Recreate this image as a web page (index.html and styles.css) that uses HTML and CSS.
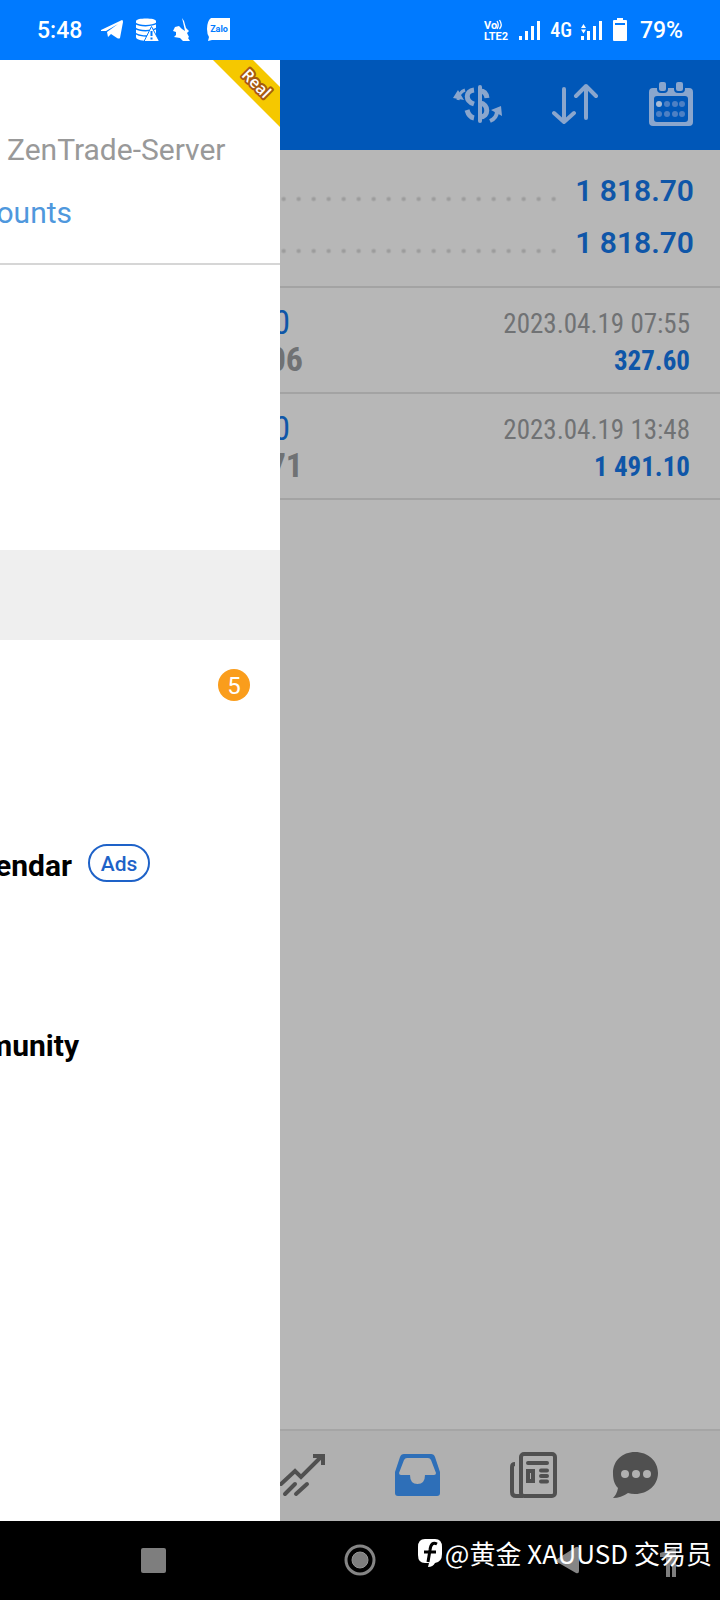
FILE: index.html
```
<!DOCTYPE html>
<html lang="en">
<head>
    <meta charset="UTF-8">
    <meta name="viewport" content="width=device-width, initial-scale=1.0">
    <title>History</title>
    <link rel="stylesheet" href="styles.css">
</head>
<body>

    <!-- Status bar -->
    <header class="status-bar">
        <div class="status-group">
            <span class="clock">5:48</span>
            <svg width="24" height="24" viewBox="0 0 24 24" fill="#fff"><path d="M2 12 L23 2 Q24 2 24 4 L21 20 Q20 21 18 20 L12 16 L9 19 L8 14 L19 6 L7 13 L2 13Z"/></svg>
            <svg width="24" height="24" viewBox="0 0 24 24"><path fill="#fff" d="M1 3 C1 -.3 21 -.3 21 3 V19 C21 24 1 24 1 19Z"/><path d="M0 5 C4 8.500 17 8.500 22 5 M0 10 C4 13.500 17 13.500 22 10 M0 15 C4 18.500 13 18.500 17 17" fill="none" stroke="#007aff" stroke-width="1.500"/><path fill="#fff" stroke="#007aff" stroke-width="1" d="M16.500 8.500 L24.500 23.500 H9Z"/><path stroke="#007aff" stroke-width="2" d="M16.500 13 V18 M16.500 19.500 V21.500"/></svg>
            <svg width="24" height="24" viewBox="0 0 24 24" fill="#fff"><path d="M11 0 L13 3 L15 10 L18 13 L16 15 L18 19 L17 20 L19 23 H12 L9 20 L3 19 L5 17 V14 L2 13 L4 9 L8 8 L11 11 L14 13 L12 4Z"/></svg>
            <svg width="24" height="24" viewBox="0 0 24 24"><path fill="#fff" d="M4 0 H23 V22 H5 L1 23 L2 19 Q0 16 0 11 Q0 3 4 0Z"/><text class="zalo-text" x="12" y="14" text-anchor="middle">Zalo</text></svg>
        </div>
        <div class="status-group status-right">
            <svg width="26" height="24" viewBox="0 0 26 24"><text class="volte-text" x="0" y="11">Vo</text><path d="M13 3 Q15.500 7 13 11 M15.500 2 Q19 7 15.500 11" fill="none" stroke="#fff" stroke-width="1.300"/><text class="volte-text" x="0" y="22">LTE2</text></svg>
            <svg width="22" height="20" viewBox="0 0 22 20" fill="#fff"><path d="M0 16h3v4H0zM6 11h3v9H6zM12 6h3v14h-3zM18 1h3v19h-3z"/></svg>
            <span class="network">4G</span>
            <svg width="22" height="20" viewBox="0 0 22 20" fill="#fff"><path d="M0 16h3v4H0zM6 11h3v9H6zM12 6h3v14h-3zM18 1h3v19h-3zM0 8 L2.500 4 L5 8zM0 9.500 H5 L2.500 13.500z"/></svg>
            <svg width="16" height="24" viewBox="0 0 16 24"><path fill="#fff" d="M5 0h6v2h3q1 0 1 1v19q0 1-1 1H2q-1 0-1-1V3q0-1 1-1h3z"/><path fill="#007aff" d="M3 5h10v2H3z"/></svg>
            <span class="clock">79%</span>
        </div>
    </header>

    <div class="app">

        <!-- Side menu -->
        <aside class="drawer">
            <svg class="ribbon" width="67" height="67" viewBox="0 0 67 67">
                <path fill="#f5c800" d="M0 0 H40 L67 27 V67Z"/>
                <text class="ribbon-text" transform="translate(43 24) rotate(45)" x="0" y="5" text-anchor="middle">Real</text>
            </svg>
            <div class="account">
                <div class="server">ZenTrade-Server</div>
                <a class="manage" href="#">ounts</a>
            </div>
            <nav class="menu">
                <a class="menu-item" href="#"></a>
                <a class="menu-item" href="#"></a>
                <a class="menu-item" href="#"></a>
                <a class="menu-item selected" href="#"></a>
                <a class="menu-item" href="#"><span class="badge">5</span></a>
                <a class="menu-item" href="#"></a>
                <a class="menu-item" href="#"><span class="menu-label">endar</span><span class="ads">Ads</span></a>
                <a class="menu-item" href="#"></a>
                <a class="menu-item" href="#"><span class="menu-label wide">munity</span></a>
            </nav>
        </aside>

        <!-- History page behind the menu -->
        <main class="page">
            <div class="toolbar">
                <button class="icon-button" aria-label="Symbols">
                    <svg width="50" height="46" viewBox="0 0 50 46" fill="none" stroke="#8aa6cd" stroke-width="5">
                        <path d="M27 6 V40" stroke-width="4" stroke-linecap="round"/>
                        <path d="M21 9 C12 10 12 20 21 23 M14 29 Q16 36 21 37"/>
                        <path d="M27 10 Q33 10 34 17 M27 22 C36 23 36 36 27 36"/>
                        <path d="M12 9 Q6 11 5 19" stroke-width="3"/><path d="M0 17 L5 9 L11 19Z M38 29 L48 25 L49 35Z" fill="#8aa6cd" stroke="none"/>
                        <path d="M44 30 Q44 37 37 40" stroke-width="4"/>
                    </svg>
                </button>
                <button class="icon-button" aria-label="Sort">
                    <svg width="48" height="46" viewBox="0 0 48 46" fill="none" stroke="#8aa6cd" stroke-width="4" stroke-linecap="round" stroke-linejoin="round"><path d="M12 8 V41 M2 32 L12 41 L22 32 M34 37 V5 M24 15 L34 5 L44 15"/></svg>
                </button>
                <button class="icon-button" aria-label="Period">
                    <svg width="44" height="46" viewBox="0 0 44 46">
                        <path fill="#8aa6cd" fill-rule="evenodd" d="M4 7 H40 Q44 7 44 11 V41 Q44 45 40 45 H4 Q0 45 0 41 V11 Q0 7 4 7Z M8 15 Q5 15 5 18 V38 Q5 41 8 41 H36 Q39 41 39 38 V18 Q39 15 36 15Z"/>
                        <rect x="9" y="0" width="9" height="11" rx="3" fill="#8aa6cd" stroke="#0057b8" stroke-width="2"/>
                        <rect x="26" y="0" width="9" height="11" rx="3" fill="#8aa6cd" stroke="#0057b8" stroke-width="2"/>
                        <g fill="#4d80c4"><circle cx="18" cy="23" r="3"/><circle cx="26" cy="23" r="3"/><circle cx="33" cy="23" r="3"/><circle cx="10" cy="33" r="3"/><circle cx="18" cy="33" r="3"/><circle cx="26" cy="33" r="3"/><circle cx="33" cy="33" r="3"/></g>
                        <circle cx="10" cy="23" r="3" fill="#a9bbd5"/>
                    </svg>
                </button>
            </div>

            <div class="summary">
                <div class="summary-row"><span class="dots"></span><span>1 818.70</span></div>
                <div class="summary-row"><span class="dots"></span><span>1 818.70</span></div>
            </div>

            <div class="deal">
                <div class="deal-left"><span class="volume">0</span><span class="price">06</span></div>
                <div class="deal-right"><span class="date">2023.04.19 07:55</span><span class="profit">327.60</span></div>
            </div>
            <div class="deal">
                <div class="deal-left"><span class="volume">0</span><span class="price">71</span></div>
                <div class="deal-right"><span class="date">2023.04.19 13:48</span><span class="profit">1 491.10</span></div>
            </div>

            <nav class="tabs">
                <a href="#" aria-label="Trade">
                    <svg width="46" height="46" viewBox="0 0 46 46" fill="none" stroke="#505050" stroke-width="4" stroke-linecap="round"><path d="M1 32 L15 19 L21 25 L41 5"/><path d="M33 4 H43 V13" stroke-linecap="butt"/><path d="M5 42 L15 32 M16 42 L27 32"/></svg>
                </a>
                <a href="#" aria-label="History">
                    <svg width="46" height="46" viewBox="0 0 46 46"><path fill="#2e6fb8" fill-rule="evenodd" d="M10 2 H37 Q40 2 41 5 L46 20 V41 Q46 44 43 44 H4 Q1 44 1 41 V20 L6 5 Q7 2 10 2Z M13 6 Q11 6 10 8 L5 21 Q5 23 7 23 H16 Q16 32 23.500 32 Q31 32 31 23 H40 Q42 23 42 21 L37 8 Q36 6 34 6Z"/></svg>
                </a>
                <a href="#" aria-label="News">
                    <svg width="48" height="46" viewBox="0 0 48 46" fill="none" stroke="#505050"><rect x="11" y="2" width="34" height="42" rx="3" stroke-width="4"/><path d="M5 12 Q2 12 2 15 V40 Q2 44 6 44 H13" stroke-width="4"/><path d="M18 11 H37 M31 18.500 H37 M31 24 H37 M31 29.500 H37" stroke-width="4" stroke-linecap="round"/><rect x="18" y="19" width="5" height="10" stroke-width="4"/></svg>
                </a>
                <a href="#" aria-label="Messages">
                    <svg width="46" height="46" viewBox="0 0 46 46"><path fill="#505050" d="M23 0 C36 0 46 9 46 21 C46 33 36 42 23 42 Q19 42 16 41 Q9 46 1 46 Q5 42 6 36 C2 32 1 27 1 21 C1 9 10 0 23 0Z"/><g fill="#b0b0b0"><circle cx="13" cy="22" r="4"/><circle cx="24" cy="22" r="4"/><circle cx="35" cy="22" r="4"/></g></svg>
                </a>
            </nav>
        </main>
    </div>

    <!-- System navigation -->
    <footer class="system-nav">
        <button class="icon-button" aria-label="Recent apps"><svg width="26" height="26" viewBox="0 0 26 26"><rect x="1" y="1" width="25" height="25" rx="2" fill="#7e7e7e"/></svg></button>
        <button class="icon-button" aria-label="Home screen"><svg width="32" height="32" viewBox="0 0 32 32"><circle cx="16" cy="16" r="14" fill="none" stroke="#858585" stroke-width="3"/><circle cx="16" cy="16" r="8" fill="#7e7e7e" stroke="#969696" stroke-width="1"/></svg></button>
        <button class="icon-button" aria-label="Back"><svg width="24" height="28" viewBox="0 0 24 28"><path fill="#858585" d="M2 13 L21 1 Q24 0 24 3 V25 Q24 28 21 27 L2 16 Q0 14.500 2 13Z"/></svg></button>
        <svg class="shortcut" width="20" height="30" viewBox="0 0 20 30"><path fill="#7e7e7e" d="M0 6 L16 1 V30 H12 V18 H10 V30 H6 V10 H0Z"/></svg>
        <div class="credit">
            <svg width="26" height="30" viewBox="0 0 26 30"><path fill="#fff" d="M8 1 H18 Q25 1 25 9 V16 Q25 24 18 25 Q16 29 11 29 L12 25 H8 Q1 25 1 17 V9 Q1 1 8 1Z"/><path fill="none" stroke="#000" stroke-width="3" d="M20 6 Q14 3 13 12 L11 24 M7 14 H19"/></svg>
            <span>@黄金 XAUUSD 交易员</span>
        </div>
    </footer>

</body>
</html>
```

FILE: styles.css
```
* {
    box-sizing: border-box;
}

body {
    margin: 0;
    min-height: 100vh;
    display: flex;
    flex-direction: column;
    font-family: Roboto, 'Liberation Sans', sans-serif;
    background-color: #000;
}

a {
    color: inherit;
    text-decoration: none;
}

svg {
    display: block;
    flex-shrink: 0;
}

.icon-button {
    border: none;
    padding: 0;
    background: none;
    cursor: pointer;
}

/* status bar */
.status-bar {
    height: 60px;
    padding: 0 37px;
    display: flex;
    justify-content: space-between;
    align-items: center;
    background-color: #007aff;
    color: #fff;
}

.status-group {
    display: flex;
    align-items: center;
    gap: 12px;
}

.status-right {
    gap: 9px;
}

.clock {
    font-size: 23px;
    font-weight: 500;
    line-height: 28px;
    padding-top: 2px;
}

.status-group .clock:first-child {
    margin-right: 5px;
}

.status-right .clock {
    margin-left: 3px;
}

.network {
    font-family: 'Roboto Condensed', 'Liberation Sans Narrow', Roboto, sans-serif;
    font-size: 20px;
    font-weight: 500;
}

.volte-text {
    font-size: 11px;
    font-weight: 700;
    fill: #fff;
}

.zalo-text {
    font-size: 9px;
    font-weight: 700;
    fill: #007aff;
}

.app {
    flex: 1;
    display: flex;
}

/* side menu */
.drawer {
    position: relative;
    flex: 0 0 280px;
    overflow: hidden;
    background-color: #fff;
}

.ribbon {
    position: absolute;
    top: 0;
    right: 0;
}

.ribbon-text {
    font-family: 'Open Sans', sans-serif;
    font-size: 16px;
    font-weight: 600;
    fill: #fff;
    stroke: #a85a10;
    stroke-width: 4px;
    stroke-linejoin: round;
    paint-order: stroke;
}

.account {
    height: 205px;
    padding: 70px 0 0 7px;
    border-bottom: 2px solid #d6d6d6;
    font-size: 30px;
    line-height: 40px;
}

.server {
    color: #999;
}

.manage {
    display: flex;
    justify-content: flex-end;
    width: 65px;
    margin-top: 23px;
    color: #4f98dd;
}

.menu {
    padding-top: 15px;
}

.menu-item {
    display: flex;
    align-items: center;
    height: 90px;
    font-size: 30px;
    font-weight: 700;
    color: #000;
}

.menu-item.selected {
    background-color: #efefef;
}

.menu-label {
    display: flex;
    justify-content: flex-end;
    width: 72px;
}

.menu-label.wide {
    width: 79px;
}

.badge {
    width: 32px;
    height: 32px;
    margin-left: auto;
    margin-right: 30px;
    border-radius: 50%;
    background-color: #fa9d1c;
    color: #fff;
    font-size: 24px;
    font-weight: 400;
    line-height: 34px;
    text-align: center;
}

.ads {
    width: 62px;
    height: 38px;
    margin: 0 0 4px 16px;
    border: 2px solid #1e62c8;
    border-radius: 19px;
    color: #1e62c8;
    font-size: 21px;
    font-weight: 500;
    line-height: 36px;
    text-align: center;
}

/* dimmed page */
.page {
    flex: 1;
    min-width: 0;
    display: flex;
    flex-direction: column;
    background-color: #b7b7b7;
    overflow: hidden;
}

.toolbar {
    height: 90px;
    padding: 0 27px 2px 0;
    display: flex;
    justify-content: flex-end;
    align-items: center;
    gap: 49px;
    background-color: #0057b8;
}

.summary {
    height: 138px;
    padding: 15px 26px 0 0;
    border-bottom: 2px solid #a3a3a3;
    color: #0f56a8;
    font-size: 30px;
    font-weight: 600;
    line-height: 52px;
}

.summary-row {
    display: flex;
    align-items: center;
    gap: 14px;
}

.dots {
    flex: 1;
    height: 6px;
    margin-top: 16px;
    background: radial-gradient(circle, #9c9c9c 1px, transparent 3px) right center / 15px 6px repeat-x;
}

.deal {
    height: 106px;
    padding: 16px 30px 0 0;
    border-bottom: 2px solid #a3a3a3;
    display: flex;
    justify-content: space-between;
    font-family: 'Roboto Condensed', 'Liberation Sans Narrow', Roboto, sans-serif;
}

.deal-left,
.deal-right {
    display: flex;
    flex-direction: column;
    align-items: flex-end;
    line-height: 37px;
}

.deal-left {
    width: 23px;
    font-size: 34px;
}

.deal-right {
    padding-top: 2px;
    font-size: 27px;
}

.volume {
    margin-right: 13px;
    color: #0f56a8;
}

.price {
    color: #707274;
    font-weight: 700;
}

.date {
    color: #707274;
}

.profit {
    color: #0f56a8;
    font-weight: 700;
}

.tabs {
    height: 92px;
    padding-bottom: 3px;
    margin-top: auto;
    border-top: 2px solid #a5a5a5;
    background-color: #b0b0b0;
    display: grid;
    grid-template-columns: 38fr 39fr 34fr 36fr;
    align-items: center;
}

/* system navigation */
.system-nav {
    position: relative;
    height: 79px;
    padding: 0 50px 2px;
    display: flex;
    align-items: center;
    background-color: #000;
}

.system-nav .icon-button {
    flex: 1;
    display: flex;
    justify-content: center;
}

.shortcut {
    position: absolute;
    right: 40px;
    bottom: 23px;
}

.credit {
    position: absolute;
    right: 8px;
    bottom: 29px;
    display: flex;
    align-items: center;
    gap: 2px;
    color: #fff;
    font-family: 'Noto Sans CJK SC', sans-serif;
    font-size: 26px;
    line-height: 36px;
    white-space: nowrap;
}
```
